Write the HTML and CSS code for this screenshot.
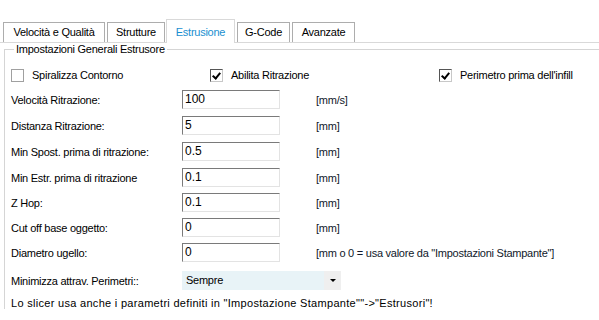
FILE: index.html
```html
<!DOCTYPE html>
<html lang="it">
<head>
<meta charset="utf-8">
<title>Estrusione</title>
<link rel="stylesheet" href="styles.css">
</head>
<body>
<div class="tabs">
	<div class="tab t1">Velocità e Qualità</div>
	<div class="tab t2">Strutture</div>
	<div class="tab t3 active">Estrusione</div>
	<div class="tab t4">G-Code</div>
	<div class="tab t5">Avanzate</div>
</div>
<fieldset class="group">
	<legend>Impostazioni Generali Estrusore</legend>
	<div class="check-row">
		<label class="check c1"><span class="box"></span>Spiralizza Contorno</label>
		<label class="check c2"><span class="box on"></span>Abilita Ritrazione</label>
		<label class="check"><span class="box on"></span>Perimetro prima dell'infill</label>
	</div>
	<div class="row"><span class="label">Velocità Ritrazione:</span><span class="field">100</span><span class="unit">[mm/s]</span></div>
	<div class="row"><span class="label">Distanza Ritrazione:</span><span class="field">5</span><span class="unit">[mm]</span></div>
	<div class="row"><span class="label">Min Spost. prima di ritrazione:</span><span class="field">0.5</span><span class="unit">[mm]</span></div>
	<div class="row"><span class="label">Min Estr. prima di ritrazione</span><span class="field">0.1</span><span class="unit">[mm]</span></div>
	<div class="row"><span class="label">Z Hop:</span><span class="field">0.1</span><span class="unit">[mm]</span></div>
	<div class="row"><span class="label">Cut off base oggetto:</span><span class="field">0</span><span class="unit">[mm]</span></div>
	<div class="row"><span class="label">Diametro ugello:</span><span class="field">0</span><span class="unit">[mm o 0 = usa valore da "Impostazioni Stampante"]</span></div>
	<div class="row combo-row">
		<span class="label">Minimizza attrav. Perimetri::</span>
		<div class="combo"><span class="combo-text">Sempre</span><span class="combo-arrow"></span></div>
	</div>
	<p class="note">Lo slicer usa anche i parametri definiti in "Impostazione Stampante""-&gt;"Estrusori"!</p>
</fieldset>
</body>
</html>
```

FILE: styles.css
```css
body {
	margin: 0;
	background: #fff;
	font-family: "Liberation Sans", Arial, sans-serif;
	font-size: 11px;
	letter-spacing: -0.25px;
	color: #000;
	overflow: hidden;
}
.tabs {
	display: flex;
	align-items: flex-end;
	height: 42px;
	padding-left: 3px;
	border-bottom: 1px solid #d9d9d9;
}
.tab {
	box-sizing: border-box;
	height: 20px;
	line-height: 19px;
	text-align: center;
	white-space: nowrap;
	margin-right: 2px;
	border: 1px solid #adadad;
	border-bottom: none;
	background: #fff;
}
.t1 { width: 102px; }
.t2 { width: 58px; margin-right: 1px; }
.t3 { width: 69px; }
.t4 { width: 53px; }
.t5 { width: 63px; }
.tab.active {
	height: 24px;
	line-height: 25px;
	color: #1a8fd0;
	border-color: #d9d9d9;
	margin-bottom: -1px;
	background: #fff;
}
.group {
	margin: 0 0 0 4px;
	padding: 0 0 0 6px;
	border: none;
	border-top: 1px solid #d5d5d5;
	border-left: 1px solid #d5d5d5;
	min-width: 0;
}
.group legend {
	padding: 0 2px;
	margin-left: 3px;
	line-height: 12px;
}
.check-row {
	display: flex;
	align-items: center;
	height: 26px;
	margin-top: 7px;
}
.check {
	display: flex;
	align-items: center;
}
.c1 { width: 199px; }
.c2 { width: 229px; }
.box {
	width: 11px;
	height: 11px;
	margin-right: 8px;
	border: 1px solid #a0a0a0;
	background: #fff;
	position: relative;
}
.box.on {
	border-color: #555 #c8c8c8 #c8c8c8 #555;
}
.box.on::after {
	content: "";
	position: absolute;
	left: 3px;
	top: 1px;
	width: 3px;
	height: 6px;
	border: solid #000;
	border-width: 0 2px 2px 0;
	transform: rotate(40deg);
}
.row {
	display: flex;
	align-items: center;
	height: 19px;
	margin-top: 7px;
}
.check-row + .row {
	margin-top: 2px;
}
.row:nth-child(n+7) {
	margin-top: 6px;
}
.label {
	width: 171px;
	flex: none;
}
.field {
	width: 94px;
	height: 17px;
	line-height: 17px;
	padding-left: 2px;
	border: 1px solid;
	border-color: #7a7a7a #e3e3e3 #e3e3e3 #7a7a7a;
	flex: none;
	font-size: 12px;
	letter-spacing: 0;
}
.unit {
	margin-left: 36px;
	color: #10182a;
}
.row.combo-row {
	margin-top: 9px;
}
.combo {
	display: flex;
	width: 159px;
	height: 19px;
	background: #e8f3f7;
}
.combo-text {
	flex: 1;
	line-height: 19px;
	padding-left: 4px;
}
.combo-arrow {
	width: 17px;
	background: #efefef;
	position: relative;
}
.combo-arrow::after {
	content: "";
	position: absolute;
	left: 6px;
	top: 8px;
	border-left: 3px solid transparent;
	border-right: 3px solid transparent;
	border-top: 3px solid #000;
}
.note {
	margin: 7px 0 0 0;
	letter-spacing: 0.3px;
}
```
